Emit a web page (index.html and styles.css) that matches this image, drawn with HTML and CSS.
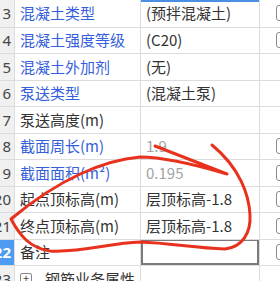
FILE: index.html
```html
<!DOCTYPE html>
<html lang="zh-CN">
<head>
  <meta charset="UTF-8" />
  <meta name="viewport" content="width=device-width, initial-scale=1.0"/>
  <title>属性列表</title>
  <link rel="stylesheet" href="styles.css">
</head>
<body>
  <div class="sheet">
    <div class="row">
      <div class="num">3</div>
      <div class="name blue">混凝土类型</div>
      <div class="val sel-top">(预拌混凝土)</div>
      <div class="chk"><span class="box"></span></div>
    </div>
    <div class="row">
      <div class="num">4</div>
      <div class="name blue">混凝土强度等级</div>
      <div class="val">(C20)</div>
      <div class="chk"><span class="box"></span></div>
    </div>
    <div class="row">
      <div class="num">5</div>
      <div class="name blue">混凝土外加剂</div>
      <div class="val">(无)</div>
      <div class="chk"></div>
    </div>
    <div class="row">
      <div class="num">6</div>
      <div class="name blue">泵送类型</div>
      <div class="val">(混凝土泵)</div>
      <div class="chk"></div>
    </div>
    <div class="row">
      <div class="num">7</div>
      <div class="name">泵送高度(m)</div>
      <div class="val"></div>
      <div class="chk"></div>
    </div>
    <div class="row">
      <div class="num">8</div>
      <div class="name blue">截面周长(m)</div>
      <div class="val muted">1.9</div>
      <div class="chk"><span class="box"></span></div>
    </div>
    <div class="row">
      <div class="num">9</div>
      <div class="name blue">截面面积(m²)</div>
      <div class="val muted">0.195</div>
      <div class="chk"><span class="box"></span></div>
    </div>
    <div class="row">
      <div class="num">20</div>
      <div class="name">起点顶标高(m)</div>
      <div class="val">层顶标高-1.8</div>
      <div class="chk"><span class="box"></span></div>
    </div>
    <div class="row">
      <div class="num">21</div>
      <div class="name">终点顶标高(m)</div>
      <div class="val">层顶标高-1.8</div>
      <div class="chk"><span class="box"></span></div>
    </div>
    <div class="row active">
      <div class="num">22</div>
      <div class="name">备注</div>
      <div class="val"><span class="edit"></span></div>
      <div class="chk"><span class="box"></span></div>
    </div>
    <div class="row">
      <div class="num">23</div>
      <div class="name"><span class="plus">+</span>钢筋业务属性</div>
      <div class="val"></div>
      <div class="chk"></div>
    </div>
  </div>

  <!-- 红色圈注 -->
  <svg class="mark" width="280" height="281" viewBox="0 0 280 281">
    <path d="M155,146 L227,174 C200,166 165,157 140,157 C105,160 60,178 11,219 C20,236 30,248 50,251 C80,253 110,243 140,242 C170,243 195,248 225,249 C243,247 251,232 250,215 C249,195 240,168 212,145"
          fill="none" stroke="#e8321e" stroke-width="3" stroke-linecap="round" stroke-linejoin="round"/>
  </svg>
</body>
</html>
```

FILE: styles.css
```css
body {
  margin: 0;
  font-family: "Noto Sans CJK SC", "Noto Sans", sans-serif;
  font-size: 15px;
  color: #333;
  background: #fff;
}

.sheet {
  width: 280px;
  height: 281px;
  overflow: hidden;
}

.row {
  display: grid;
  grid-template-columns: 15px 126px 119px 20px;
  height: 26.5px;
  box-sizing: border-box;
  border-bottom: 1px solid #dcdcdc;
}

.row:first-child {
  height: 27.5px;
}

.row > div {
  display: flex;
  align-items: center;
  box-sizing: border-box;
  border-right: 1px solid #dcdcdc;
  line-height: 20px;
  white-space: nowrap;
  overflow: hidden;
}

.num {
  justify-content: flex-end;
  padding-right: 3px;
  background: #f0f0f0;
  color: #444;
  font-family: "Noto Sans", sans-serif;
}

.name {
  padding-left: 5px;
}

.blue {
  color: #3560dc;
}

.val {
  padding-left: 5px;
  position: relative;
}

.muted {
  color: #a3a3a3;
}

.sel-top {
  box-shadow: inset 0 2px #4b8fe2;
}

.row > .chk {
  border-right: none;
  padding-left: 16px;
}

.box {
  display: block;
  width: 14px;
  height: 14px;
  flex: none;
  border: 1px solid #8a8a8a;
  border-radius: 3px;
}

.row.active .num {
  background: #4d9cf2;
  color: #fff;
  font-weight: bold;
}

.row.active .val {
  padding: 0;
}

.edit {
  display: block;
  width: 100%;
  height: 100%;
  box-sizing: border-box;
  border: 2px solid #7a7a7a;
  margin-top: -1px;
}

.plus {
  display: inline-flex;
  align-items: center;
  justify-content: center;
  width: 10px;
  height: 10px;
  border: 1px solid #888;
  border-radius: 2px;
  font-size: 11px;
  line-height: 1;
  margin: 0 13px 0 0;
  color: #444;
}

.mark {
  position: absolute;
  top: 0;
  left: 0;
  pointer-events: none;
}
```
